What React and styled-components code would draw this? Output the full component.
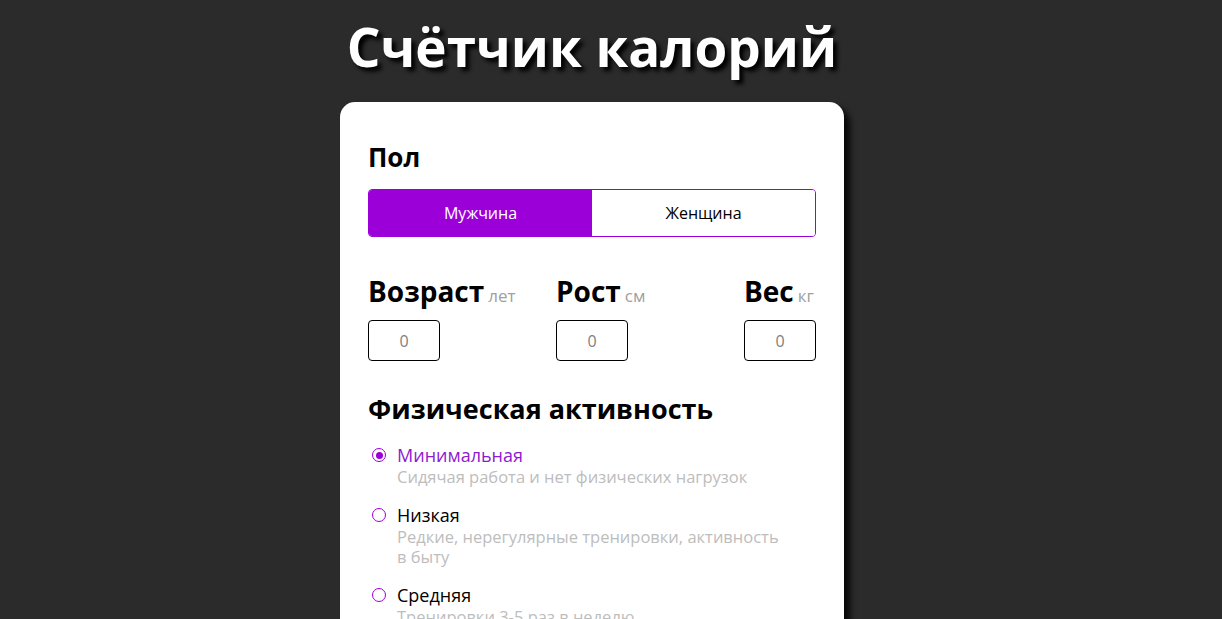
import styled, { createGlobalStyle } from 'styled-components';

const GlobalStyle = createGlobalStyle`
    html, body {
        margin: 0;
        padding: 0;
        background: #2b2b2b;
        font-family: "Open Sans", "Noto Sans", sans-serif;
    }
    * {
        box-sizing: border-box;
    }
`;

const activities = [
    { id: 'min', title: 'Минимальная', text: 'Сидячая работа и нет физических нагрузок' },
    { id: 'low', title: 'Низкая', text: 'Редкие, нерегулярные тренировки, активность в быту' },
    { id: 'mid', title: 'Средняя', text: 'Тренировки 3-5 раз в неделю' },
    { id: 'high', title: 'Высокая', text: 'Тренировки 6-7 раз в неделю' },
];

const params = [
    { id: 'age', name: 'Возраст', unit: 'лет' },
    { id: 'height', name: 'Рост', unit: 'см' },
    { id: 'weight', name: 'Вес', unit: 'кг' },
];

function App() {
    return (
        <Page>
            <GlobalStyle />
            <Title>Счётчик калорий</Title>
            <Card>
                <Heading>Пол</Heading>
                <Switcher>
                    <SwitchButton $active>Мужчина</SwitchButton>
                    <SwitchButton>Женщина</SwitchButton>
                </Switcher>

                <Params>
                    {params.map((p) => (
                        <Param key={p.id}>
                            <ParamLabel>
                                {p.name}
                                <Unit>{p.unit}</Unit>
                            </ParamLabel>
                            <NumberInput placeholder="0" />
                        </Param>
                    ))}
                </Params>

                <Heading $big>Физическая активность</Heading>
                <RadioList>
                    {activities.map((a, i) => (
                        <RadioItem key={a.id}>
                            <Circle $checked={i === 0} />
                            <RadioText>
                                <RadioTitle $checked={i === 0}>{a.title}</RadioTitle>
                                <RadioDesc>{a.text}</RadioDesc>
                            </RadioText>
                        </RadioItem>
                    ))}
                </RadioList>
            </Card>
        </Page>
    );
}
export default App;

const Page = styled.div`
    display: flex;
    flex-direction: column;
    align-items: center;
    padding: 7px 38px 40px 0;
`;

const Title = styled.h1`
    margin: 0 0 15px;
    color: #ffffff;
    font-size: 53px;
    font-weight: 700;
    line-height: 80px;
    text-shadow: 4px 4px 4px #000000;
`;

const Card = styled.div`
    width: 504px;
    background: #ffffff;
    border-radius: 15px;
    padding: 37px 28px 30px;
    box-shadow: 6px 6px 6px rgba(0, 0, 0, 0.85);
`;

const Heading = styled.h2`
    margin: 0 0 ${({ $big }) => ($big ? '16px' : '14px')};
    font-size: ${({ $big }) => ($big ? '27px' : '26px')};
    font-weight: 700;
    line-height: 36px;
    color: #000000;
`;

const Switcher = styled.div`
    display: flex;
    height: 48px;
    border: 1px solid #9b00d9;
    border-radius: 4px;
    overflow: hidden;
`;

const SwitchButton = styled.button`
    flex: 1;
    border: none;
    margin: 0;
    font-family: inherit;
    font-size: 16px;
    cursor: pointer;
    background: ${({ $active }) => ($active ? '#9b00d9' : '#ffffff')};
    color: ${({ $active }) => ($active ? '#ffffff' : '#000000')};
`;

const Params = styled.div`
    display: flex;
    justify-content: space-between;
    margin: 35px 0 30px;
`;

const Param = styled.div`
    width: 72px;
    display: flex;
    flex-direction: column;
    gap: 5px;
`;

const ParamLabel = styled.div`
    white-space: nowrap;
    font-size: 28px;
    font-weight: 700;
    line-height: 38px;
    color: #000000;
`;

const Unit = styled.span`
    margin-left: 4px;
    font-size: 17px;
    font-weight: 400;
    color: #a0a0a0;
`;

const NumberInput = styled.input`
    width: 72px;
    height: 41px;
    border: 1px solid #000000;
    border-radius: 4px;
    text-align: center;
    font-family: inherit;
    font-size: 16px;
    outline: none;
    &::placeholder {
        color: #808080;
    }
`;

const RadioList = styled.div`
    display: flex;
    flex-direction: column;
    gap: 16px;
`;

const RadioItem = styled.label`
    display: flex;
    align-items: flex-start;
    gap: 11px;
    cursor: pointer;
`;

const Circle = styled.span`
    flex: none;
    width: 14px;
    height: 14px;
    margin: 5px 0 0 4px;
    border: 1.5px solid #9b00d9;
    border-radius: 50%;
    display: flex;
    align-items: center;
    justify-content: center;
    &::after {
        content: '';
        width: 7px;
        height: 7px;
        border-radius: 50%;
        background: ${({ $checked }) => ($checked ? '#9b00d9' : 'transparent')};
    }
`;

const RadioText = styled.div`
    max-width: 392px;
`;

const RadioTitle = styled.div`
    font-size: 18px;
    line-height: 24px;
    color: ${({ $checked }) => ($checked ? '#8e1ad1' : '#000000')};
`;

const RadioDesc = styled.div`
    font-size: 16.5px;
    line-height: 20px;
    color: #bdbdbd;
`;
